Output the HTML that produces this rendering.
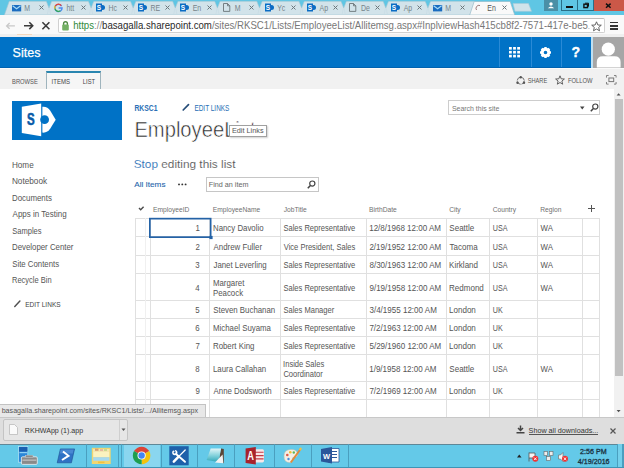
<!DOCTYPE html>
<html><head><meta charset="utf-8"><style>
*{box-sizing:border-box;margin:0;padding:0}
html,body{width:624px;height:468px;overflow:hidden;background:#fff;font-family:"Liberation Sans",sans-serif}
.a{position:absolute;white-space:nowrap;line-height:1}
svg.a{overflow:visible}
</style></head><body>
<div class="a" style="left:0px;top:0px;width:624px;height:15px;background:#5fc6e4;"></div>
<svg class="a" style="left:0px;top:0px;" width="624" height="15" viewBox="0 0 624 15"><polygon points="4.4,15 9.2,1.3 474.7,1.3 478.7,15" fill="#d2e3ea" stroke="#a3c6d4" stroke-width="0.6"/><polygon points="46.3,0.9 51.7,0.9 49.0,8" fill="#5fc6e4"/><path d="M46.3,1.3 L49.0,8 L51.7,1.3" fill="none" stroke="#a3c6d4" stroke-width="0.6"/><path d="M48.6,8 L47.4,14.5 M49.4,8 L50.6,14.5" stroke="#c3d9e2" stroke-width="0.5"/><polygon points="88.4,0.9 93.8,0.9 91.1,8" fill="#5fc6e4"/><path d="M88.4,1.3 L91.1,8 L93.8,1.3" fill="none" stroke="#a3c6d4" stroke-width="0.6"/><path d="M90.7,8 L89.5,14.5 M91.5,8 L92.7,14.5" stroke="#c3d9e2" stroke-width="0.5"/><polygon points="130.5,0.9 135.9,0.9 133.2,8" fill="#5fc6e4"/><path d="M130.5,1.3 L133.2,8 L135.9,1.3" fill="none" stroke="#a3c6d4" stroke-width="0.6"/><path d="M132.8,8 L131.6,14.5 M133.6,8 L134.8,14.5" stroke="#c3d9e2" stroke-width="0.5"/><polygon points="172.6,0.9 178.0,0.9 175.3,8" fill="#5fc6e4"/><path d="M172.6,1.3 L175.3,8 L178.0,1.3" fill="none" stroke="#a3c6d4" stroke-width="0.6"/><path d="M174.9,8 L173.7,14.5 M175.7,8 L176.9,14.5" stroke="#c3d9e2" stroke-width="0.5"/><polygon points="214.7,0.9 220.1,0.9 217.4,8" fill="#5fc6e4"/><path d="M214.7,1.3 L217.4,8 L220.1,1.3" fill="none" stroke="#a3c6d4" stroke-width="0.6"/><path d="M217.0,8 L215.8,14.5 M217.8,8 L219.0,14.5" stroke="#c3d9e2" stroke-width="0.5"/><polygon points="256.8,0.9 262.2,0.9 259.5,8" fill="#5fc6e4"/><path d="M256.8,1.3 L259.5,8 L262.2,1.3" fill="none" stroke="#a3c6d4" stroke-width="0.6"/><path d="M259.1,8 L257.9,14.5 M259.9,8 L261.1,14.5" stroke="#c3d9e2" stroke-width="0.5"/><polygon points="298.9,0.9 304.3,0.9 301.6,8" fill="#5fc6e4"/><path d="M298.9,1.3 L301.6,8 L304.3,1.3" fill="none" stroke="#a3c6d4" stroke-width="0.6"/><path d="M301.2,8 L300.0,14.5 M302.0,8 L303.2,14.5" stroke="#c3d9e2" stroke-width="0.5"/><polygon points="341.0,0.9 346.4,0.9 343.7,8" fill="#5fc6e4"/><path d="M341.0,1.3 L343.7,8 L346.4,1.3" fill="none" stroke="#a3c6d4" stroke-width="0.6"/><path d="M343.3,8 L342.1,14.5 M344.1,8 L345.3,14.5" stroke="#c3d9e2" stroke-width="0.5"/><polygon points="383.1,0.9 388.5,0.9 385.8,8" fill="#5fc6e4"/><path d="M383.1,1.3 L385.8,8 L388.5,1.3" fill="none" stroke="#a3c6d4" stroke-width="0.6"/><path d="M385.4,8 L384.2,14.5 M386.2,8 L387.4,14.5" stroke="#c3d9e2" stroke-width="0.5"/><polygon points="425.2,0.9 430.6,0.9 427.9,8" fill="#5fc6e4"/><path d="M425.2,1.3 L427.9,8 L430.6,1.3" fill="none" stroke="#a3c6d4" stroke-width="0.6"/><path d="M427.5,8 L426.3,14.5 M428.3,8 L429.5,14.5" stroke="#c3d9e2" stroke-width="0.5"/><polygon points="469.7,15 474.2,1.5 510.2,1.5 514.7,15" fill="#f9f9f9" stroke="#8fb5c5" stroke-width="0.6"/><polygon points="515,11.3 513,3.5 528.5,3.5 531.5,11.3" fill="#cfe3ea" stroke="#a9cbd8" stroke-width="0.6" stroke-linejoin="round"/></svg>
<svg class="a" style="left:12.0px;top:4.8px;" width="9.2" height="6.4" viewBox="0 0 9.2 6.4"><rect x="0" y="0" width="9.2" height="6.4" fill="#1a6cc0"/><polyline points="0.6,0.7 4.6,3.8 8.6,0.7" fill="none" stroke="#a8dcf8" stroke-width="1.1"/></svg>
<svg class="a" style="left:0;top:0" width="624" height="468"><text x="24.24" y="10.60" font-family="Liberation Sans" font-size="8.20" font-weight="normal" fill="#76848a" textLength="5.81" lengthAdjust="spacingAndGlyphs" >M</text></svg>
<svg class="a" style="left:38.5px;top:5px;" width="5" height="5" viewBox="0 0 5 5"><path d="M0.5 0.5 L4.5 4.5 M4.5 0.5 L0.5 4.5" stroke="#6b777c" stroke-width="1"/></svg>
<svg class="a" style="left:54.1px;top:3.2px;" width="9" height="9" viewBox="0 0 9 9"><path d="M7.6 3.2 A3.6 3.6 0 1 0 8.1 5 H4.6" fill="none" stroke="#4a8af4" stroke-width="1.3"/><path d="M7.3 2.6 A3.6 3.6 0 0 0 1.2 3" fill="none" stroke="#ea4335" stroke-width="1.3"/><path d="M1 5.6 A3.6 3.6 0 0 0 6.4 7.8" fill="none" stroke="#34a853" stroke-width="1.3"/><path d="M1.1 3 A3.6 3.6 0 0 0 1 5.6" fill="none" stroke="#fbbc05" stroke-width="1.3"/></svg>
<svg class="a" style="left:0;top:0" width="624" height="468"><text x="66.41" y="10.60" font-family="Liberation Sans" font-size="8.20" font-weight="normal" fill="#76848a" textLength="7.75" lengthAdjust="spacingAndGlyphs" >htt</text></svg>
<svg class="a" style="left:80.6px;top:5px;" width="5" height="5" viewBox="0 0 5 5"><path d="M0.5 0.5 L4.5 4.5 M4.5 0.5 L0.5 4.5" stroke="#6b777c" stroke-width="1"/></svg>
<svg class="a" style="left:96.2px;top:3px;" width="9" height="9" viewBox="0 0 9 9"><rect x="0" y="0.5" width="6" height="8" fill="#0a6cc4"/><circle cx="6.5" cy="4.5" r="2.5" fill="#0a6cc4"/><text x="3" y="7" font-size="6.5" font-weight="bold" fill="#fff" text-anchor="middle" font-family="Liberation Sans">S</text></svg>
<svg class="a" style="left:0;top:0" width="624" height="468"><text x="108.44" y="10.60" font-family="Liberation Sans" font-size="8.20" font-weight="normal" fill="#76848a" textLength="8.52" lengthAdjust="spacingAndGlyphs" >Hc</text></svg>
<svg class="a" style="left:122.7px;top:5px;" width="5" height="5" viewBox="0 0 5 5"><path d="M0.5 0.5 L4.5 4.5 M4.5 0.5 L0.5 4.5" stroke="#6b777c" stroke-width="1"/></svg>
<svg class="a" style="left:138.3px;top:3px;" width="9" height="9" viewBox="0 0 9 9"><rect x="0" y="0.5" width="6" height="8" fill="#0a6cc4"/><circle cx="6.5" cy="4.5" r="2.5" fill="#0a6cc4"/><text x="3" y="7" font-size="6.5" font-weight="bold" fill="#fff" text-anchor="middle" font-family="Liberation Sans">S</text></svg>
<svg class="a" style="left:0;top:0" width="624" height="468"><text x="150.54" y="10.60" font-family="Liberation Sans" font-size="8.20" font-weight="normal" fill="#76848a" textLength="9.68" lengthAdjust="spacingAndGlyphs" >RE</text></svg>
<svg class="a" style="left:164.8px;top:5px;" width="5" height="5" viewBox="0 0 5 5"><path d="M0.5 0.5 L4.5 4.5 M4.5 0.5 L0.5 4.5" stroke="#6b777c" stroke-width="1"/></svg>
<svg class="a" style="left:180.4px;top:3px;" width="9" height="9" viewBox="0 0 9 9"><rect x="0" y="0.5" width="6" height="8" fill="#0a6cc4"/><circle cx="6.5" cy="4.5" r="2.5" fill="#0a6cc4"/><text x="3" y="7" font-size="6.5" font-weight="bold" fill="#fff" text-anchor="middle" font-family="Liberation Sans">S</text></svg>
<svg class="a" style="left:0;top:0" width="624" height="468"><text x="192.64" y="10.60" font-family="Liberation Sans" font-size="8.20" font-weight="normal" fill="#76848a" textLength="8.53" lengthAdjust="spacingAndGlyphs" >En</text></svg>
<svg class="a" style="left:206.9px;top:5px;" width="5" height="5" viewBox="0 0 5 5"><path d="M0.5 0.5 L4.5 4.5 M4.5 0.5 L0.5 4.5" stroke="#6b777c" stroke-width="1"/></svg>
<svg class="a" style="left:222.5px;top:3.4px;" width="7.5" height="9" viewBox="0 0 7.5 9"><path d="M0.5 0.5 H4.5 L6.8 2.8 V8.4 H0.5 Z M4.5 0.5 V2.8 H6.8" fill="none" stroke="#6a7478" stroke-width="0.9"/></svg>
<svg class="a" style="left:0;top:0" width="624" height="468"><text x="234.74" y="10.60" font-family="Liberation Sans" font-size="8.20" font-weight="normal" fill="#76848a" textLength="5.81" lengthAdjust="spacingAndGlyphs" >M</text></svg>
<svg class="a" style="left:249.0px;top:5px;" width="5" height="5" viewBox="0 0 5 5"><path d="M0.5 0.5 L4.5 4.5 M4.5 0.5 L0.5 4.5" stroke="#6b777c" stroke-width="1"/></svg>
<svg class="a" style="left:264.6px;top:3px;" width="9" height="9" viewBox="0 0 9 9"><rect x="0" y="0.5" width="6" height="8" fill="#0a6cc4"/><circle cx="6.5" cy="4.5" r="2.5" fill="#0a6cc4"/><text x="3" y="7" font-size="6.5" font-weight="bold" fill="#fff" text-anchor="middle" font-family="Liberation Sans">S</text></svg>
<svg class="a" style="left:0;top:0" width="624" height="468"><text x="277.23" y="10.60" font-family="Liberation Sans" font-size="8.20" font-weight="normal" fill="#76848a" textLength="8.13" lengthAdjust="spacingAndGlyphs" >Yc</text></svg>
<svg class="a" style="left:291.1px;top:5px;" width="5" height="5" viewBox="0 0 5 5"><path d="M0.5 0.5 L4.5 4.5 M4.5 0.5 L0.5 4.5" stroke="#6b777c" stroke-width="1"/></svg>
<svg class="a" style="left:306.7px;top:3px;" width="9" height="9" viewBox="0 0 9 9"><rect x="0" y="0.5" width="6" height="8" fill="#0a6cc4"/><circle cx="6.5" cy="4.5" r="2.5" fill="#0a6cc4"/><text x="3" y="7" font-size="6.5" font-weight="bold" fill="#fff" text-anchor="middle" font-family="Liberation Sans">S</text></svg>
<svg class="a" style="left:0;top:0" width="624" height="468"><text x="319.50" y="10.60" font-family="Liberation Sans" font-size="8.20" font-weight="normal" fill="#76848a" textLength="8.53" lengthAdjust="spacingAndGlyphs" >Ap</text></svg>
<svg class="a" style="left:333.2px;top:5px;" width="5" height="5" viewBox="0 0 5 5"><path d="M0.5 0.5 L4.5 4.5 M4.5 0.5 L0.5 4.5" stroke="#6b777c" stroke-width="1"/></svg>
<svg class="a" style="left:348.8px;top:3.4px;" width="7.5" height="9" viewBox="0 0 7.5 9"><path d="M0.5 0.5 H4.5 L6.8 2.8 V8.4 H0.5 Z M4.5 0.5 V2.8 H6.8" fill="none" stroke="#6a7478" stroke-width="0.9"/></svg>
<svg class="a" style="left:0;top:0" width="624" height="468"><text x="361.04" y="10.60" font-family="Liberation Sans" font-size="8.20" font-weight="normal" fill="#76848a" textLength="8.91" lengthAdjust="spacingAndGlyphs" >De</text></svg>
<svg class="a" style="left:375.3px;top:5px;" width="5" height="5" viewBox="0 0 5 5"><path d="M0.5 0.5 L4.5 4.5 M4.5 0.5 L0.5 4.5" stroke="#6b777c" stroke-width="1"/></svg>
<svg class="a" style="left:390.90000000000003px;top:3px;" width="9" height="9" viewBox="0 0 9 9"><rect x="0" y="0.5" width="6" height="8" fill="#0a6cc4"/><circle cx="6.5" cy="4.5" r="2.5" fill="#0a6cc4"/><text x="3" y="7" font-size="6.5" font-weight="bold" fill="#fff" text-anchor="middle" font-family="Liberation Sans">S</text></svg>
<svg class="a" style="left:0;top:0" width="624" height="468"><text x="403.70" y="10.60" font-family="Liberation Sans" font-size="8.20" font-weight="normal" fill="#76848a" textLength="8.53" lengthAdjust="spacingAndGlyphs" >Ap</text></svg>
<svg class="a" style="left:417.40000000000003px;top:5px;" width="5" height="5" viewBox="0 0 5 5"><path d="M0.5 0.5 L4.5 4.5 M4.5 0.5 L0.5 4.5" stroke="#6b777c" stroke-width="1"/></svg>
<svg class="a" style="left:433.0px;top:4.8px;" width="9.2" height="6.4" viewBox="0 0 9.2 6.4"><rect x="0" y="0" width="9.2" height="6.4" fill="#1a6cc0"/><polyline points="0.6,0.7 4.6,3.8 8.6,0.7" fill="none" stroke="#a8dcf8" stroke-width="1.1"/></svg>
<svg class="a" style="left:0;top:0" width="624" height="468"><text x="445.24" y="10.60" font-family="Liberation Sans" font-size="8.20" font-weight="normal" fill="#76848a" textLength="5.81" lengthAdjust="spacingAndGlyphs" >M</text></svg>
<svg class="a" style="left:459.5px;top:5px;" width="5" height="5" viewBox="0 0 5 5"><path d="M0.5 0.5 L4.5 4.5 M4.5 0.5 L0.5 4.5" stroke="#6b777c" stroke-width="1"/></svg>
<svg class="a" style="left:475.1px;top:3.5px;" width="8" height="8" viewBox="0 0 8 8"><path d="M1.5 6 A3 3 0 0 1 5 1.5" fill="none" stroke="#a07a7a" stroke-width="1"/></svg>
<svg class="a" style="left:0;top:0" width="624" height="468"><text x="487.34" y="10.60" font-family="Liberation Sans" font-size="8.20" font-weight="normal" fill="#555" textLength="8.53" lengthAdjust="spacingAndGlyphs" >En</text></svg>
<svg class="a" style="left:501.6px;top:5px;" width="5" height="5" viewBox="0 0 5 5"><path d="M0.5 0.5 L4.5 4.5 M4.5 0.5 L0.5 4.5" stroke="#6b777c" stroke-width="1"/></svg>
<div class="a" style="left:543.8px;top:0px;width:14.1px;height:10.6px;background:#4a8fa6;"></div>
<svg class="a" style="left:543.8px;top:0px;" width="14.1" height="10.6" viewBox="0 0 14.1 10.6"><circle cx="7" cy="4" r="1.7" fill="#fff"/><path d="M3.8 8.3 Q7 4.8 10.2 8.3 Z" fill="#fff"/></svg>
<div class="a" style="left:561px;top:0px;width:17.3px;height:11px;background:#5fc6e4;border-left:1px solid #2a6f88;border-right:1px solid #2a6f88;border-bottom:1px solid #2a6f88"></div>
<div class="a" style="left:566.3px;top:5.8px;width:6.4px;height:2px;background:#111;"></div>
<div class="a" style="left:578.3px;top:0px;width:15.5px;height:11px;background:#5fc6e4;border-right:1px solid #2a6f88;border-bottom:1px solid #2a6f88"></div>
<svg class="a" style="left:0px;top:0px;left:0;top:0" width="624" height="468" viewBox="0 0 624 468"><rect x="583.9" y="4.2" width="3.6" height="3.4" fill="none" stroke="#111" stroke-width="1.4"/><path d="M585 3.2 H588.5 V6.6" fill="none" stroke="#111" stroke-width="1"/></svg>
<div class="a" style="left:593.8px;top:0px;width:30.2px;height:11.3px;background:#cb5848;"></div>
<svg class="a" style="left:0px;top:0px;left:0;top:0" width="624" height="468" viewBox="0 0 624 468"><path d="M606 3.6 L610.6 7.7 M610.6 3.6 L606 7.7" stroke="#111" stroke-width="1.5"/></svg>
<div class="a" style="left:0px;top:14.7px;width:624px;height:22.3px;background:#f9f9f9;"></div>
<div class="a" style="left:0px;top:33.5px;width:624px;height:3.3px;background:#efefef;"></div>
<svg class="a" style="left:0px;top:0px;left:0;top:0" width="624" height="468" viewBox="0 0 624 468"><path d="M6.5 25.9 H14.9 M9.6 23 L6.6 25.9 L9.6 28.8" fill="none" stroke="#c8c8c8" stroke-width="1.3"/><path d="M24 25.7 H32.6 M29.3 22.3 L32.7 25.7 L29.3 29.1" fill="none" stroke="#3a3a3a" stroke-width="1.6"/><path d="M42.4 22.2 L49.4 29.2 M49.4 22.2 L42.4 29.2" stroke="#3a3a3a" stroke-width="1.6"/></svg>
<div class="a" style="left:57.5px;top:17.5px;width:547px;height:15.2px;background:#fff;border:1px solid #d0d0d0;border-top-color:#bdbdbd;border-radius:2px"></div>
<svg class="a" style="left:0px;top:0px;left:0;top:0" width="624" height="468" viewBox="0 0 624 468"><path d="M63.6 25 V23.6 A1.9 1.9 0 0 1 67.4 23.6 V25" fill="none" stroke="#4f8a43" stroke-width="1.4"/><rect x="62.2" y="24.6" width="6.6" height="5.8" rx="1" fill="#73b064"/></svg>
<svg class="a" style="left:0;top:0" width="624" height="468"><text x="73.13" y="29.00" font-family="Liberation Sans" font-size="10.26" font-weight="normal" fill="#777" textLength="514.75" lengthAdjust="spacingAndGlyphs" ><tspan fill="#2f8a3a">https</tspan><tspan fill="#888">://</tspan><tspan fill="#2a2a2a">basagalla.sharepoint.com</tspan><tspan fill="#777">/sites/RKSC1/Lists/EmployeeList/Allitemsg.aspx#InplviewHash415cb8f2-7571-417e-be5</tspan></text></svg>
<svg class="a" style="left:0px;top:0px;left:0;top:0" width="624" height="468" viewBox="0 0 624 468"><text x="587.6" y="29" font-family="Liberation Sans" font-size="9.7" fill="#bbb">.</text></svg>
<svg class="a" style="left:591px;top:20.5px;" width="11" height="11" viewBox="0 0 11 11"><path d="M5.5 0.8 L6.9 4 L10.3 4.2 L7.7 6.4 L8.5 9.8 L5.5 8 L2.5 9.8 L3.3 6.4 L0.7 4.2 L4.1 4 Z" fill="#fff" stroke="#555" stroke-width="0.9"/></svg>
<div class="a" style="left:609.8px;top:21.6px;width:7.9px;height:1.7px;background:#333;"></div>
<div class="a" style="left:609.8px;top:25px;width:7.9px;height:1.7px;background:#333;"></div>
<div class="a" style="left:609.8px;top:28.2px;width:7.9px;height:1.7px;background:#333;"></div>
<div class="a" style="left:16.7px;top:34.2px;width:15px;height:0.8px;background:#f3d7bd;"></div>
<div class="a" style="left:0px;top:36.8px;width:591px;height:30.8px;background:#0072c6;"></div>
<div class="a" style="left:0px;top:66.6px;width:591px;height:1px;background:#0062b0;"></div>
<div class="a" style="left:590.6px;top:36.8px;width:2.6px;height:30.8px;background:#bfe0f2;"></div>
<svg class="a" style="left:0;top:0" width="624" height="468"><text x="12.54" y="57.00" font-family="Liberation Sans" font-size="13.31" font-weight="normal" fill="#fff" textLength="27.88" lengthAdjust="spacingAndGlyphs" stroke="#fff" stroke-width="0.25">Sites</text></svg>
<div class="a" style="left:499px;top:37px;width:1px;height:30px;background:#2a8ad6;"></div>
<div class="a" style="left:530.5px;top:37px;width:1px;height:30px;background:#2a8ad6;"></div>
<div class="a" style="left:560.5px;top:37px;width:1px;height:30px;background:#2a8ad6;"></div>
<svg class="a" style="left:509px;top:47px;" width="11.5" height="10.5" viewBox="0 0 11.5 10.5"><rect x="0.00" y="0.00" width="2.8" height="2.6" fill="#fff"/><rect x="4.10" y="0.00" width="2.8" height="2.6" fill="#fff"/><rect x="8.20" y="0.00" width="2.8" height="2.6" fill="#fff"/><rect x="0.00" y="3.90" width="2.8" height="2.6" fill="#fff"/><rect x="4.10" y="3.90" width="2.8" height="2.6" fill="#fff"/><rect x="8.20" y="3.90" width="2.8" height="2.6" fill="#fff"/><rect x="0.00" y="7.80" width="2.8" height="2.6" fill="#fff"/><rect x="4.10" y="7.80" width="2.8" height="2.6" fill="#fff"/><rect x="8.20" y="7.80" width="2.8" height="2.6" fill="#fff"/></svg>
<svg class="a" style="left:539.5px;top:46.7px;" width="11" height="11" viewBox="0 0 11 11"><circle cx="5.5" cy="5.5" r="3.3" fill="none" stroke="#fff" stroke-width="3"/><rect x="4.3" y="0" width="2.4" height="3" fill="#fff" transform="rotate(0 5.5 5.5)"/><rect x="4.3" y="0" width="2.4" height="3" fill="#fff" transform="rotate(45 5.5 5.5)"/><rect x="4.3" y="0" width="2.4" height="3" fill="#fff" transform="rotate(90 5.5 5.5)"/><rect x="4.3" y="0" width="2.4" height="3" fill="#fff" transform="rotate(135 5.5 5.5)"/><rect x="4.3" y="0" width="2.4" height="3" fill="#fff" transform="rotate(180 5.5 5.5)"/><rect x="4.3" y="0" width="2.4" height="3" fill="#fff" transform="rotate(225 5.5 5.5)"/><rect x="4.3" y="0" width="2.4" height="3" fill="#fff" transform="rotate(270 5.5 5.5)"/><rect x="4.3" y="0" width="2.4" height="3" fill="#fff" transform="rotate(315 5.5 5.5)"/></svg>
<svg class="a" style="left:0;top:0" width="624" height="468"><text x="571.56" y="57.30" font-family="Liberation Sans" font-size="15.52" font-weight="bold" fill="#fff" textLength="8.62" lengthAdjust="spacingAndGlyphs" stroke="#fff" stroke-width="0.4">?</text></svg>
<div class="a" style="left:593px;top:36.8px;width:31px;height:30.8px;background:#a6a6a6;"></div>
<svg class="a" style="left:0px;top:0px;left:0;top:0" width="624" height="468" viewBox="0 0 624 468"><circle cx="608.3" cy="49.2" r="6.6" fill="#fff"/><path d="M596.8 67.6 V62 Q596.8 56.3 603 56.3 H614.4 Q620.6 56.3 620.6 62 V67.6 Z" fill="#fff"/></svg>
<div class="a" style="left:0px;top:67.6px;width:624px;height:21.2px;background:#f1f1f1;"></div>
<div class="a" style="left:0px;top:67.6px;width:624px;height:1px;background:#fafafa;"></div>
<svg class="a" style="left:0;top:0" width="624" height="468"><text x="12.04" y="83.70" font-family="Liberation Sans" font-size="7.61" font-weight="normal" fill="#555" textLength="25.80" lengthAdjust="spacingAndGlyphs" >BROWSE</text></svg>
<div class="a" style="left:45.7px;top:71px;width:55.7px;height:17.5px;background:#f6f6f6;border-left:1px solid #9fb4bd;border-right:1px solid #9fb4bd;border-top:2px solid #2a86b0"></div>
<svg class="a" style="left:0;top:0" width="624" height="468"><text x="51.56" y="83.70" font-family="Liberation Sans" font-size="7.61" font-weight="normal" fill="#444" textLength="18.42" lengthAdjust="spacingAndGlyphs" >ITEMS</text></svg>
<svg class="a" style="left:0;top:0" width="624" height="468"><text x="82.84" y="83.70" font-family="Liberation Sans" font-size="7.61" font-weight="normal" fill="#444" textLength="12.19" lengthAdjust="spacingAndGlyphs" >LIST</text></svg>
<svg class="a" style="left:515.5px;top:76px;" width="9.5" height="9.5" viewBox="0 0 9.5 9.5"><circle cx="4.75" cy="4.75" r="3.5" fill="none" stroke="#666" stroke-width="0.9" stroke-dasharray="4.5 1"/><circle cx="4.75" cy="1.2" r="1.2" fill="#555"/><circle cx="1.5" cy="6.8" r="1.2" fill="#555"/><circle cx="8" cy="6.8" r="1.2" fill="#555"/></svg>
<svg class="a" style="left:0;top:0" width="624" height="468"><text x="527.75" y="83.30" font-family="Liberation Sans" font-size="7.33" font-weight="normal" fill="#555" textLength="19.48" lengthAdjust="spacingAndGlyphs" >SHARE</text></svg>
<svg class="a" style="left:555px;top:74.5px;" width="10" height="10" viewBox="0 0 10 10"><path d="M5 0.8 L6.2 3.8 L9.4 4 L6.9 6 L7.7 9.2 L5 7.5 L2.3 9.2 L3.1 6 L0.6 4 L3.8 3.8 Z" fill="none" stroke="#555" stroke-width="0.9"/></svg>
<svg class="a" style="left:0;top:0" width="624" height="468"><text x="567.93" y="83.30" font-family="Liberation Sans" font-size="7.33" font-weight="normal" fill="#555" textLength="24.68" lengthAdjust="spacingAndGlyphs" >FOLLOW</text></svg>
<svg class="a" style="left:605.6px;top:75px;" width="10.6" height="9.6" viewBox="0 0 10.6 9.6"><path d="M0.5 2.6 V0.5 H2.6 M8 0.5 H10.1 V2.6 M10.1 7 V9.1 H8 M2.6 9.1 H0.5 V7" fill="none" stroke="#777" stroke-width="0.9"/><rect x="2.9" y="3" width="4.8" height="3.6" fill="none" stroke="#777" stroke-width="1"/></svg>
<div class="a" style="left:614px;top:88.8px;width:10px;height:328px;background:#f1f1f1;"></div>
<div class="a" style="left:614.8px;top:99.2px;width:8.6px;height:276.6px;background:#c1c1c1;"></div>
<svg class="a" style="left:0px;top:0px;left:0;top:0" width="624" height="468" viewBox="0 0 624 468"><path d="M616.6 95.6 L618.6 93.3 L620.6 95.6 Z" fill="#505050"/><path d="M616.6 410 L618.6 412.3 L620.6 410 Z" fill="#505050"/></svg>
<div class="a" style="left:12px;top:100.5px;width:110px;height:39px;background:#0072c6;"></div>
<svg class="a" style="left:0px;top:0px;left:0;top:0" width="624" height="468" viewBox="0 0 624 468"><path d="M21.8 106.8 L41.2 103.6 V136.3 L21.8 132.9 Z" fill="#fff"/><path d="M42.4 106.8 Q47.5 106.3 50.3 110.8 L55.7 119.7 L50.3 128.6 Q47.5 133.1 42.4 132.6 Z" fill="#fff"/><circle cx="44.6" cy="119.7" r="4.4" fill="#0072c6"/></svg>
<svg class="a" style="left:0;top:0" width="624" height="468"><text x="26.96" y="125.40" font-family="Liberation Sans" font-size="16.38" font-weight="bold" fill="#0a5aa8" textLength="7.67" lengthAdjust="spacingAndGlyphs" stroke="#0a5aa8" stroke-width="0.6">S</text></svg>
<svg class="a" style="left:0;top:0" width="624" height="468"><text x="134.46" y="110.70" font-family="Liberation Sans" font-size="8.19" font-weight="bold" fill="#2a6fb5" textLength="23.01" lengthAdjust="spacingAndGlyphs" >RKSC1</text></svg>
<svg class="a" style="left:0px;top:0px;left:0;top:0" width="624" height="468" viewBox="0 0 624 468"><path d="M183.2 110 L188.5 104.6" stroke="#264d78" stroke-width="1.7" stroke-linecap="round"/></svg>
<svg class="a" style="left:0;top:0" width="624" height="468"><text x="194.38" y="110.70" font-family="Liberation Sans" font-size="8.19" font-weight="normal" fill="#2a6fb5" textLength="35.03" lengthAdjust="spacingAndGlyphs" >EDIT LINKS</text></svg>
<svg class="a" style="left:0;top:0" width="624" height="468"><text x="134.39" y="136.50" font-family="Liberation Sans" font-size="22.60" font-weight="normal" fill="#222" textLength="121.17" lengthAdjust="spacingAndGlyphs" stroke="#fff" stroke-width="0.6">EmployeeList</text></svg>
<div class="a" style="left:228.8px;top:125px;width:38.7px;height:11.6px;background:#fff;border:1px solid #a0a0a0;box-shadow:1px 1px 1.5px rgba(0,0,0,.18)"></div>
<svg class="a" style="left:0;top:0" width="624" height="468"><text x="231.92" y="133.20" font-family="Liberation Sans" font-size="7.49" font-weight="normal" fill="#555" textLength="31.64" lengthAdjust="spacingAndGlyphs" >Edit Links</text></svg>
<div class="a" style="left:448.4px;top:100.4px;width:152px;height:14.8px;background:#fff;border:1px solid #cdcdcd"></div>
<svg class="a" style="left:0;top:0" width="624" height="468"><text x="451.89" y="110.90" font-family="Liberation Sans" font-size="7.49" font-weight="normal" fill="#777" textLength="47.54" lengthAdjust="spacingAndGlyphs" >Search this site</text></svg>
<svg class="a" style="left:579.5px;top:106px;" width="5" height="4" viewBox="0 0 5 4"><path d="M0 0.5 H4.5 L2.25 3.5 Z" fill="#444"/></svg>
<svg class="a" style="left:589.5px;top:102.5px;" width="9" height="9" viewBox="0 0 9 9"><circle cx="5.3" cy="3.6" r="2.6" fill="none" stroke="#444" stroke-width="1.2"/><path d="M3.4 5.4 L0.8 8.2" stroke="#444" stroke-width="1.5"/></svg>
<svg class="a" style="left:0;top:0" width="624" height="468"><text x="133.67" y="168.40" font-family="Liberation Sans" font-size="11.78" font-weight="normal" fill="#555" textLength="101.80" lengthAdjust="spacingAndGlyphs" stroke="#fff" stroke-width="0.12"><tspan fill="#2a6fb5">Stop</tspan> editing this list</text></svg>
<svg class="a" style="left:0;top:0" width="624" height="468"><text x="134.20" y="187.10" font-family="Liberation Sans" font-size="7.21" font-weight="normal" fill="#2464aa" textLength="31.28" lengthAdjust="spacingAndGlyphs" stroke="#2464aa" stroke-width="0.08">All Items</text></svg>
<svg class="a" style="left:0px;top:0px;left:0;top:0" width="624" height="468" viewBox="0 0 624 468"><circle cx="179.0" cy="184.4" r="0.95" fill="#333"/><circle cx="182.3" cy="184.4" r="0.95" fill="#333"/><circle cx="185.6" cy="184.4" r="0.95" fill="#333"/></svg>
<div class="a" style="left:206px;top:176.5px;width:113px;height:15px;background:#fff;border:1px solid #c6c6c6"></div>
<svg class="a" style="left:0;top:0" width="624" height="468"><text x="208.82" y="187.00" font-family="Liberation Sans" font-size="7.77" font-weight="normal" fill="#666" textLength="39.63" lengthAdjust="spacingAndGlyphs" >Find an item</text></svg>
<svg class="a" style="left:307px;top:179.5px;" width="9" height="9" viewBox="0 0 9 9"><circle cx="5.3" cy="3.6" r="2.6" fill="none" stroke="#444" stroke-width="1.2"/><path d="M3.4 5.4 L0.8 8.2" stroke="#444" stroke-width="1.5"/></svg>
<svg class="a" style="left:0;top:0" width="624" height="468"><text x="11.95" y="167.80" font-family="Liberation Sans" font-size="8.75" font-weight="normal" fill="#555" textLength="21.74" lengthAdjust="spacingAndGlyphs" >Home</text></svg>
<svg class="a" style="left:0;top:0" width="624" height="468"><text x="11.94" y="184.25" font-family="Liberation Sans" font-size="8.75" font-weight="normal" fill="#555" textLength="35.16" lengthAdjust="spacingAndGlyphs" >Notebook</text></svg>
<svg class="a" style="left:0;top:0" width="624" height="468"><text x="11.97" y="200.70" font-family="Liberation Sans" font-size="8.75" font-weight="normal" fill="#555" textLength="39.89" lengthAdjust="spacingAndGlyphs" >Documents</text></svg>
<svg class="a" style="left:0;top:0" width="624" height="468"><text x="12.60" y="217.15" font-family="Liberation Sans" font-size="8.75" font-weight="normal" fill="#555" textLength="54.01" lengthAdjust="spacingAndGlyphs" >Apps in Testing</text></svg>
<svg class="a" style="left:0;top:0" width="624" height="468"><text x="12.26" y="233.60" font-family="Liberation Sans" font-size="8.75" font-weight="normal" fill="#555" textLength="29.31" lengthAdjust="spacingAndGlyphs" >Samples</text></svg>
<svg class="a" style="left:0;top:0" width="624" height="468"><text x="11.97" y="250.05" font-family="Liberation Sans" font-size="8.75" font-weight="normal" fill="#555" textLength="61.47" lengthAdjust="spacingAndGlyphs" >Developer Center</text></svg>
<svg class="a" style="left:0;top:0" width="624" height="468"><text x="12.25" y="266.50" font-family="Liberation Sans" font-size="8.75" font-weight="normal" fill="#555" textLength="46.81" lengthAdjust="spacingAndGlyphs" >Site Contents</text></svg>
<svg class="a" style="left:0;top:0" width="624" height="468"><text x="12.00" y="282.95" font-family="Liberation Sans" font-size="8.75" font-weight="normal" fill="#555" textLength="39.59" lengthAdjust="spacingAndGlyphs" >Recycle Bin</text></svg>
<svg class="a" style="left:0px;top:0px;left:0;top:0" width="624" height="468" viewBox="0 0 624 468"><path d="M14.8 306.6 L19.9 301.1" stroke="#505050" stroke-width="1.45" stroke-linecap="round"/></svg>
<svg class="a" style="left:0;top:0" width="624" height="468"><text x="25.18" y="307.00" font-family="Liberation Sans" font-size="7.47" font-weight="normal" fill="#444" textLength="35.43" lengthAdjust="spacingAndGlyphs" >EDIT LINKS</text></svg>
<div class="a" style="left:135px;top:218px;width:464px;height:1px;background:#e0e0e0;"></div>
<div class="a" style="left:135px;top:236px;width:464px;height:1px;background:#e0e0e0;"></div>
<div class="a" style="left:135px;top:255px;width:464px;height:1px;background:#e0e0e0;"></div>
<div class="a" style="left:135px;top:273px;width:464px;height:1px;background:#e0e0e0;"></div>
<div class="a" style="left:135px;top:300px;width:464px;height:1px;background:#e0e0e0;"></div>
<div class="a" style="left:135px;top:318px;width:464px;height:1px;background:#e0e0e0;"></div>
<div class="a" style="left:135px;top:336px;width:464px;height:1px;background:#e0e0e0;"></div>
<div class="a" style="left:135px;top:354px;width:464px;height:1px;background:#e0e0e0;"></div>
<div class="a" style="left:135px;top:381px;width:464px;height:1px;background:#e0e0e0;"></div>
<div class="a" style="left:135px;top:399px;width:464px;height:1px;background:#e0e0e0;"></div>
<div class="a" style="left:135px;top:430px;width:464px;height:1px;background:#e0e0e0;"></div>
<div class="a" style="left:135px;top:218px;width:1px;height:212px;background:#e0e0e0;"></div>
<div class="a" style="left:150px;top:218px;width:1px;height:212px;background:#e0e0e0;"></div>
<div class="a" style="left:209px;top:218px;width:1px;height:212px;background:#e0e0e0;"></div>
<div class="a" style="left:280px;top:218px;width:1px;height:212px;background:#e0e0e0;"></div>
<div class="a" style="left:366px;top:218px;width:1px;height:212px;background:#e0e0e0;"></div>
<div class="a" style="left:446px;top:218px;width:1px;height:212px;background:#e0e0e0;"></div>
<div class="a" style="left:489px;top:218px;width:1px;height:212px;background:#e0e0e0;"></div>
<div class="a" style="left:537px;top:218px;width:1px;height:212px;background:#e0e0e0;"></div>
<div class="a" style="left:582px;top:218px;width:1px;height:212px;background:#e0e0e0;"></div>
<div class="a" style="left:599px;top:218px;width:1px;height:212px;background:#e0e0e0;"></div>
<svg class="a" style="left:0px;top:0px;left:0;top:0" width="624" height="468" viewBox="0 0 624 468"><path d="M139 208 L140.7 209.8 L143.6 206.8" fill="none" stroke="#4a4a4a" stroke-width="1.4"/></svg>
<svg class="a" style="left:0;top:0" width="624" height="468"><text x="153.07" y="212.00" font-family="Liberation Sans" font-size="7.58" font-weight="normal" fill="#707070" textLength="36.35" lengthAdjust="spacingAndGlyphs" >EmployeeID</text></svg>
<svg class="a" style="left:0;top:0" width="624" height="468"><text x="212.87" y="212.00" font-family="Liberation Sans" font-size="7.58" font-weight="normal" fill="#707070" textLength="47.47" lengthAdjust="spacingAndGlyphs" >EmployeeName</text></svg>
<svg class="a" style="left:0;top:0" width="624" height="468"><text x="283.70" y="212.00" font-family="Liberation Sans" font-size="7.58" font-weight="normal" fill="#707070" textLength="23.12" lengthAdjust="spacingAndGlyphs" >JobTitle</text></svg>
<svg class="a" style="left:0;top:0" width="624" height="468"><text x="368.97" y="212.00" font-family="Liberation Sans" font-size="7.58" font-weight="normal" fill="#707070" textLength="27.82" lengthAdjust="spacingAndGlyphs" >BirthDate</text></svg>
<svg class="a" style="left:0;top:0" width="624" height="468"><text x="449.17" y="212.00" font-family="Liberation Sans" font-size="7.58" font-weight="normal" fill="#707070" textLength="11.49" lengthAdjust="spacingAndGlyphs" >City</text></svg>
<svg class="a" style="left:0;top:0" width="624" height="468"><text x="492.67" y="212.00" font-family="Liberation Sans" font-size="7.58" font-weight="normal" fill="#707070" textLength="23.37" lengthAdjust="spacingAndGlyphs" >Country</text></svg>
<svg class="a" style="left:0;top:0" width="624" height="468"><text x="540.27" y="212.00" font-family="Liberation Sans" font-size="7.58" font-weight="normal" fill="#707070" textLength="21.15" lengthAdjust="spacingAndGlyphs" >Region</text></svg>
<svg class="a" style="left:587.5px;top:204.5px;" width="7" height="7" viewBox="0 0 7 7"><path d="M3.5 0 V7 M0 3.5 H7" stroke="#555" stroke-width="1"/></svg>
<svg class="a" style="left:0;top:0" width="624" height="468"><text x="195.40" y="231.00" font-family="Liberation Sans" font-size="8.72" font-weight="normal" fill="#555" textLength="4.36" lengthAdjust="spacingAndGlyphs" >1</text></svg>
<svg class="a" style="left:0;top:0" width="624" height="468"><text x="212.97" y="231.00" font-family="Liberation Sans" font-size="8.72" font-weight="normal" fill="#555" textLength="50.60" lengthAdjust="spacingAndGlyphs" >Nancy Davolio</text></svg>
<svg class="a" style="left:0;top:0" width="624" height="468"><text x="283.46" y="231.00" font-family="Liberation Sans" font-size="8.72" font-weight="normal" fill="#555" textLength="71.70" lengthAdjust="spacingAndGlyphs" >Sales Representative</text></svg>
<svg class="a" style="left:0;top:0" width="624" height="468"><text x="369.20" y="231.00" font-family="Liberation Sans" font-size="8.72" font-weight="normal" fill="#555" textLength="71.82" lengthAdjust="spacingAndGlyphs" >12/8/1968 12:00 AM</text></svg>
<svg class="a" style="left:0;top:0" width="624" height="468"><text x="449.34" y="231.00" font-family="Liberation Sans" font-size="8.72" font-weight="normal" fill="#555" textLength="24.98" lengthAdjust="spacingAndGlyphs" >Seattle</text></svg>
<svg class="a" style="left:0;top:0" width="624" height="468"><text x="492.76" y="231.00" font-family="Liberation Sans" font-size="8.72" font-weight="normal" fill="#555" textLength="14.70" lengthAdjust="spacingAndGlyphs" >USA</text></svg>
<svg class="a" style="left:0;top:0" width="624" height="468"><text x="540.56" y="231.00" font-family="Liberation Sans" font-size="8.72" font-weight="normal" fill="#555" textLength="12.35" lengthAdjust="spacingAndGlyphs" >WA</text></svg>
<svg class="a" style="left:0;top:0" width="624" height="468"><text x="195.44" y="249.50" font-family="Liberation Sans" font-size="8.72" font-weight="normal" fill="#555" textLength="4.36" lengthAdjust="spacingAndGlyphs" >2</text></svg>
<svg class="a" style="left:0;top:0" width="624" height="468"><text x="213.60" y="249.50" font-family="Liberation Sans" font-size="8.72" font-weight="normal" fill="#555" textLength="48.42" lengthAdjust="spacingAndGlyphs" >Andrew Fuller</text></svg>
<svg class="a" style="left:0;top:0" width="624" height="468"><text x="283.76" y="249.50" font-family="Liberation Sans" font-size="8.72" font-weight="normal" fill="#555" textLength="71.56" lengthAdjust="spacingAndGlyphs" >Vice President, Sales</text></svg>
<svg class="a" style="left:0;top:0" width="624" height="468"><text x="369.40" y="249.50" font-family="Liberation Sans" font-size="8.72" font-weight="normal" fill="#555" textLength="71.82" lengthAdjust="spacingAndGlyphs" >2/19/1952 12:00 AM</text></svg>
<svg class="a" style="left:0;top:0" width="624" height="468"><text x="449.54" y="249.50" font-family="Liberation Sans" font-size="8.72" font-weight="normal" fill="#555" textLength="28.09" lengthAdjust="spacingAndGlyphs" >Tacoma</text></svg>
<svg class="a" style="left:0;top:0" width="624" height="468"><text x="492.76" y="249.50" font-family="Liberation Sans" font-size="8.72" font-weight="normal" fill="#555" textLength="14.70" lengthAdjust="spacingAndGlyphs" >USA</text></svg>
<svg class="a" style="left:0;top:0" width="624" height="468"><text x="540.56" y="249.50" font-family="Liberation Sans" font-size="8.72" font-weight="normal" fill="#555" textLength="12.35" lengthAdjust="spacingAndGlyphs" >WA</text></svg>
<svg class="a" style="left:0;top:0" width="624" height="468"><text x="195.36" y="268.00" font-family="Liberation Sans" font-size="8.72" font-weight="normal" fill="#555" textLength="4.36" lengthAdjust="spacingAndGlyphs" >3</text></svg>
<svg class="a" style="left:0;top:0" width="624" height="468"><text x="213.48" y="268.00" font-family="Liberation Sans" font-size="8.72" font-weight="normal" fill="#555" textLength="53.23" lengthAdjust="spacingAndGlyphs" >Janet Leverling</text></svg>
<svg class="a" style="left:0;top:0" width="624" height="468"><text x="283.46" y="268.00" font-family="Liberation Sans" font-size="8.72" font-weight="normal" fill="#555" textLength="71.70" lengthAdjust="spacingAndGlyphs" >Sales Representative</text></svg>
<svg class="a" style="left:0;top:0" width="624" height="468"><text x="369.44" y="268.00" font-family="Liberation Sans" font-size="8.72" font-weight="normal" fill="#555" textLength="71.82" lengthAdjust="spacingAndGlyphs" >8/30/1963 12:00 AM</text></svg>
<svg class="a" style="left:0;top:0" width="624" height="468"><text x="449.06" y="268.00" font-family="Liberation Sans" font-size="8.72" font-weight="normal" fill="#555" textLength="28.98" lengthAdjust="spacingAndGlyphs" >Kirkland</text></svg>
<svg class="a" style="left:0;top:0" width="624" height="468"><text x="492.76" y="268.00" font-family="Liberation Sans" font-size="8.72" font-weight="normal" fill="#555" textLength="14.70" lengthAdjust="spacingAndGlyphs" >USA</text></svg>
<svg class="a" style="left:0;top:0" width="624" height="468"><text x="540.56" y="268.00" font-family="Liberation Sans" font-size="8.72" font-weight="normal" fill="#555" textLength="12.35" lengthAdjust="spacingAndGlyphs" >WA</text></svg>
<svg class="a" style="left:0;top:0" width="624" height="468"><text x="195.28" y="290.90" font-family="Liberation Sans" font-size="8.72" font-weight="normal" fill="#555" textLength="4.36" lengthAdjust="spacingAndGlyphs" >4</text></svg>
<svg class="a" style="left:0;top:0" width="624" height="468"><text x="212.97" y="286.10" font-family="Liberation Sans" font-size="8.72" font-weight="normal" fill="#555" textLength="31.40" lengthAdjust="spacingAndGlyphs" >Margaret</text></svg>
<svg class="a" style="left:0;top:0" width="624" height="468"><text x="212.97" y="295.90" font-family="Liberation Sans" font-size="8.72" font-weight="normal" fill="#555" textLength="30.10" lengthAdjust="spacingAndGlyphs" >Peacock</text></svg>
<svg class="a" style="left:0;top:0" width="624" height="468"><text x="283.46" y="290.90" font-family="Liberation Sans" font-size="8.72" font-weight="normal" fill="#555" textLength="71.70" lengthAdjust="spacingAndGlyphs" >Sales Representative</text></svg>
<svg class="a" style="left:0;top:0" width="624" height="468"><text x="369.44" y="290.90" font-family="Liberation Sans" font-size="8.72" font-weight="normal" fill="#555" textLength="71.82" lengthAdjust="spacingAndGlyphs" >9/19/1958 12:00 AM</text></svg>
<svg class="a" style="left:0;top:0" width="624" height="468"><text x="449.06" y="290.90" font-family="Liberation Sans" font-size="8.72" font-weight="normal" fill="#555" textLength="34.79" lengthAdjust="spacingAndGlyphs" >Redmond</text></svg>
<svg class="a" style="left:0;top:0" width="624" height="468"><text x="492.76" y="290.90" font-family="Liberation Sans" font-size="8.72" font-weight="normal" fill="#555" textLength="14.70" lengthAdjust="spacingAndGlyphs" >USA</text></svg>
<svg class="a" style="left:0;top:0" width="624" height="468"><text x="540.56" y="290.90" font-family="Liberation Sans" font-size="8.72" font-weight="normal" fill="#555" textLength="12.35" lengthAdjust="spacingAndGlyphs" >WA</text></svg>
<svg class="a" style="left:0;top:0" width="624" height="468"><text x="195.36" y="313.00" font-family="Liberation Sans" font-size="8.72" font-weight="normal" fill="#555" textLength="4.36" lengthAdjust="spacingAndGlyphs" >5</text></svg>
<svg class="a" style="left:0;top:0" width="624" height="468"><text x="213.25" y="313.00" font-family="Liberation Sans" font-size="8.72" font-weight="normal" fill="#555" textLength="61.96" lengthAdjust="spacingAndGlyphs" >Steven Buchanan</text></svg>
<svg class="a" style="left:0;top:0" width="624" height="468"><text x="283.46" y="313.00" font-family="Liberation Sans" font-size="8.72" font-weight="normal" fill="#555" textLength="50.74" lengthAdjust="spacingAndGlyphs" >Sales Manager</text></svg>
<svg class="a" style="left:0;top:0" width="624" height="468"><text x="369.48" y="313.00" font-family="Liberation Sans" font-size="8.72" font-weight="normal" fill="#555" textLength="67.35" lengthAdjust="spacingAndGlyphs" >3/4/1955 12:00 AM</text></svg>
<svg class="a" style="left:0;top:0" width="624" height="468"><text x="449.06" y="313.00" font-family="Liberation Sans" font-size="8.72" font-weight="normal" fill="#555" textLength="26.77" lengthAdjust="spacingAndGlyphs" >London</text></svg>
<svg class="a" style="left:0;top:0" width="624" height="468"><text x="492.76" y="313.00" font-family="Liberation Sans" font-size="8.72" font-weight="normal" fill="#555" textLength="9.93" lengthAdjust="spacingAndGlyphs" >UK</text></svg>
<svg class="a" style="left:0;top:0" width="624" height="468"><text x="195.36" y="331.00" font-family="Liberation Sans" font-size="8.72" font-weight="normal" fill="#555" textLength="4.36" lengthAdjust="spacingAndGlyphs" >6</text></svg>
<svg class="a" style="left:0;top:0" width="624" height="468"><text x="212.97" y="331.00" font-family="Liberation Sans" font-size="8.72" font-weight="normal" fill="#555" textLength="58.02" lengthAdjust="spacingAndGlyphs" >Michael Suyama</text></svg>
<svg class="a" style="left:0;top:0" width="624" height="468"><text x="283.46" y="331.00" font-family="Liberation Sans" font-size="8.72" font-weight="normal" fill="#555" textLength="71.70" lengthAdjust="spacingAndGlyphs" >Sales Representative</text></svg>
<svg class="a" style="left:0;top:0" width="624" height="468"><text x="369.40" y="331.00" font-family="Liberation Sans" font-size="8.72" font-weight="normal" fill="#555" textLength="67.35" lengthAdjust="spacingAndGlyphs" >7/2/1963 12:00 AM</text></svg>
<svg class="a" style="left:0;top:0" width="624" height="468"><text x="449.06" y="331.00" font-family="Liberation Sans" font-size="8.72" font-weight="normal" fill="#555" textLength="26.77" lengthAdjust="spacingAndGlyphs" >London</text></svg>
<svg class="a" style="left:0;top:0" width="624" height="468"><text x="492.76" y="331.00" font-family="Liberation Sans" font-size="8.72" font-weight="normal" fill="#555" textLength="9.93" lengthAdjust="spacingAndGlyphs" >UK</text></svg>
<svg class="a" style="left:0;top:0" width="624" height="468"><text x="195.44" y="349.00" font-family="Liberation Sans" font-size="8.72" font-weight="normal" fill="#555" textLength="4.36" lengthAdjust="spacingAndGlyphs" >7</text></svg>
<svg class="a" style="left:0;top:0" width="624" height="468"><text x="212.97" y="349.00" font-family="Liberation Sans" font-size="8.72" font-weight="normal" fill="#555" textLength="41.44" lengthAdjust="spacingAndGlyphs" >Robert King</text></svg>
<svg class="a" style="left:0;top:0" width="624" height="468"><text x="283.46" y="349.00" font-family="Liberation Sans" font-size="8.72" font-weight="normal" fill="#555" textLength="71.70" lengthAdjust="spacingAndGlyphs" >Sales Representative</text></svg>
<svg class="a" style="left:0;top:0" width="624" height="468"><text x="369.48" y="349.00" font-family="Liberation Sans" font-size="8.72" font-weight="normal" fill="#555" textLength="71.82" lengthAdjust="spacingAndGlyphs" >5/29/1960 12:00 AM</text></svg>
<svg class="a" style="left:0;top:0" width="624" height="468"><text x="449.06" y="349.00" font-family="Liberation Sans" font-size="8.72" font-weight="normal" fill="#555" textLength="26.77" lengthAdjust="spacingAndGlyphs" >London</text></svg>
<svg class="a" style="left:0;top:0" width="624" height="468"><text x="492.76" y="349.00" font-family="Liberation Sans" font-size="8.72" font-weight="normal" fill="#555" textLength="9.93" lengthAdjust="spacingAndGlyphs" >UK</text></svg>
<svg class="a" style="left:0;top:0" width="624" height="468"><text x="195.36" y="371.90" font-family="Liberation Sans" font-size="8.72" font-weight="normal" fill="#555" textLength="4.36" lengthAdjust="spacingAndGlyphs" >8</text></svg>
<svg class="a" style="left:0;top:0" width="624" height="468"><text x="212.97" y="371.90" font-family="Liberation Sans" font-size="8.72" font-weight="normal" fill="#555" textLength="53.23" lengthAdjust="spacingAndGlyphs" >Laura Callahan</text></svg>
<svg class="a" style="left:0;top:0" width="624" height="468"><text x="283.12" y="367.10" font-family="Liberation Sans" font-size="8.72" font-weight="normal" fill="#555" textLength="41.09" lengthAdjust="spacingAndGlyphs" >Inside Sales</text></svg>
<svg class="a" style="left:0;top:0" width="624" height="468"><text x="283.42" y="376.90" font-family="Liberation Sans" font-size="8.72" font-weight="normal" fill="#555" textLength="39.41" lengthAdjust="spacingAndGlyphs" >Coordinator</text></svg>
<svg class="a" style="left:0;top:0" width="624" height="468"><text x="369.20" y="371.90" font-family="Liberation Sans" font-size="8.72" font-weight="normal" fill="#555" textLength="67.35" lengthAdjust="spacingAndGlyphs" >1/9/1958 12:00 AM</text></svg>
<svg class="a" style="left:0;top:0" width="624" height="468"><text x="449.34" y="371.90" font-family="Liberation Sans" font-size="8.72" font-weight="normal" fill="#555" textLength="24.98" lengthAdjust="spacingAndGlyphs" >Seattle</text></svg>
<svg class="a" style="left:0;top:0" width="624" height="468"><text x="492.76" y="371.90" font-family="Liberation Sans" font-size="8.72" font-weight="normal" fill="#555" textLength="14.70" lengthAdjust="spacingAndGlyphs" >USA</text></svg>
<svg class="a" style="left:0;top:0" width="624" height="468"><text x="540.56" y="371.90" font-family="Liberation Sans" font-size="8.72" font-weight="normal" fill="#555" textLength="12.35" lengthAdjust="spacingAndGlyphs" >WA</text></svg>
<svg class="a" style="left:0;top:0" width="624" height="468"><text x="195.40" y="394.00" font-family="Liberation Sans" font-size="8.72" font-weight="normal" fill="#555" textLength="4.36" lengthAdjust="spacingAndGlyphs" >9</text></svg>
<svg class="a" style="left:0;top:0" width="624" height="468"><text x="213.60" y="394.00" font-family="Liberation Sans" font-size="8.72" font-weight="normal" fill="#555" textLength="58.02" lengthAdjust="spacingAndGlyphs" >Anne Dodsworth</text></svg>
<svg class="a" style="left:0;top:0" width="624" height="468"><text x="283.46" y="394.00" font-family="Liberation Sans" font-size="8.72" font-weight="normal" fill="#555" textLength="71.70" lengthAdjust="spacingAndGlyphs" >Sales Representative</text></svg>
<svg class="a" style="left:0;top:0" width="624" height="468"><text x="369.40" y="394.00" font-family="Liberation Sans" font-size="8.72" font-weight="normal" fill="#555" textLength="67.35" lengthAdjust="spacingAndGlyphs" >7/2/1969 12:00 AM</text></svg>
<svg class="a" style="left:0;top:0" width="624" height="468"><text x="449.06" y="394.00" font-family="Liberation Sans" font-size="8.72" font-weight="normal" fill="#555" textLength="26.77" lengthAdjust="spacingAndGlyphs" >London</text></svg>
<svg class="a" style="left:0;top:0" width="624" height="468"><text x="492.76" y="394.00" font-family="Liberation Sans" font-size="8.72" font-weight="normal" fill="#555" textLength="9.93" lengthAdjust="spacingAndGlyphs" >UK</text></svg>
<div class="a" style="left:145px;top:218px;width:1px;height:199px;background:#f0f0f0;"></div>
<svg class="a" style="left:0px;top:0px;left:0;top:0" width="624" height="468" viewBox="0 0 624 468"><rect x="149.85" y="218.65" width="60.8" height="18.5" fill="none" stroke="#2462a6" stroke-width="1.7"/><rect x="209.4" y="235.9" width="3.2" height="3.2" fill="#2462a6"/></svg>
<div class="a" style="left:0px;top:403.5px;width:206px;height:13.5px;background:#e8e8e8;border-top:1px solid #c3c3c3;border-right:1px solid #c3c3c3"></div>
<svg class="a" style="left:0;top:0" width="624" height="468"><text x="1.64" y="412.70" font-family="Liberation Sans" font-size="7.35" font-weight="normal" fill="#555" textLength="196.42" lengthAdjust="spacingAndGlyphs" >basagalla.sharepoint.com/sites/RKSC1/Lists/.../Allitemsg.aspx</text></svg>
<div class="a" style="left:0px;top:417px;width:624px;height:26.5px;background:#dedede;border-top:1px solid #c8c8c8"></div>
<div class="a" style="left:2.5px;top:419px;width:125px;height:22px;background:#e6e6e6;border:1px solid #c4c4c4;border-radius:2px"></div>
<div class="a" style="left:118.5px;top:420px;width:1px;height:20px;background:#cfcfcf;"></div>
<svg class="a" style="left:121px;top:428px;" width="5" height="4" viewBox="0 0 5 4"><path d="M0.5 0.5 H4.5 L2.5 3 Z" fill="#555"/></svg>
<svg class="a" style="left:8.5px;top:423.5px;" width="9" height="11" viewBox="0 0 9 11"><path d="M0.5 0.5 H5.5 L8.5 3.5 V10.5 H0.5 Z" fill="#fafafa" stroke="#bbb" stroke-width="0.8"/></svg>
<svg class="a" style="left:0;top:0" width="624" height="468"><text x="24.83" y="433.20" font-family="Liberation Sans" font-size="7.91" font-weight="normal" fill="#333" textLength="58.34" lengthAdjust="spacingAndGlyphs" >RKHWApp (1).app</text></svg>
<svg class="a" style="left:516px;top:425px;" width="9" height="9" viewBox="0 0 9 9"><path d="M4.5 0.5 V5 M2 3 L4.5 5.5 L7 3" fill="none" stroke="#444" stroke-width="1.5"/><rect x="0.5" y="7" width="8" height="1.5" fill="#444"/></svg>
<svg class="a" style="left:0;top:0" width="624" height="468"><text x="528.58" y="432.90" font-family="Liberation Sans" font-size="7.49" font-weight="normal" fill="#333" textLength="69.69" lengthAdjust="spacingAndGlyphs" >Show all downloads...</text></svg>
<div class="a" style="left:528.9px;top:434px;width:68.7px;height:0.8px;background:#555;"></div>
<svg class="a" style="left:609.5px;top:427.5px;" width="6" height="6" viewBox="0 0 6 6"><path d="M0.5 0.5 L5.5 5.5 M5.5 0.5 L0.5 5.5" stroke="#555" stroke-width="1.2"/></svg>
<div class="a" style="left:0px;top:443.6px;width:624px;height:24.4px;background:#64c9e8;border-top:1px solid #5f8797"></div>
<div class="a" style="left:124px;top:444.6px;width:35.5px;height:23px;background:#8ad6ef;"></div>
<div class="a" style="left:85.5px;top:444px;width:1px;height:24px;background:#4a9fbf;"></div>
<div class="a" style="left:117.8px;top:444px;width:1px;height:24px;background:#4a9fbf;"></div>
<div class="a" style="left:120.6px;top:444px;width:1px;height:24px;background:#4a9fbf;"></div>
<div class="a" style="left:160.5px;top:444px;width:1px;height:24px;background:#4a9fbf;"></div>
<div class="a" style="left:196.5px;top:444px;width:1px;height:24px;background:#4a9fbf;"></div>
<div class="a" style="left:234px;top:444px;width:1px;height:24px;background:#4a9fbf;"></div>
<div class="a" style="left:273.5px;top:444px;width:1px;height:24px;background:#4a9fbf;"></div>
<div class="a" style="left:311.3px;top:444px;width:1px;height:24px;background:#4a9fbf;"></div>
<div class="a" style="left:348px;top:444px;width:1px;height:24px;background:#4a9fbf;"></div>
<svg class="a" style="left:0px;top:0px;left:0;top:0" width="624" height="468" viewBox="0 0 624 468"><rect x="18.6" y="446.6" width="9.2" height="15.6" fill="#2a86d8" stroke="#b8e6f6" stroke-width="0.7"/><rect x="19" y="447" width="8.4" height="4.5" fill="#1a5fb0"/><rect x="19.5" y="452" width="7.4" height="1.2" fill="#8fd0f4"/><rect x="21.4" y="456.8" width="15.9" height="7.6" rx="1.2" fill="#8a8a8a" stroke="#e8f4f8" stroke-width="0.8"/><rect x="25.5" y="455.2" width="7.5" height="1.8" fill="#777" stroke="#ddd" stroke-width="0.4"/><rect x="22.5" y="459.6" width="13.8" height="1.1" fill="#c8c8c8"/></svg>
<svg class="a" style="left:0px;top:0px;left:0;top:0" width="624" height="468" viewBox="0 0 624 468"><path d="M60.4 448.9 H74.6 L71.4 462.8 H57.2 Z" fill="#2f72c4" stroke="#1c4f90" stroke-width="0.6"/><path d="M60.6 449.6 H73.6 L72.6 453.5 H59.8 Z" fill="#5a98dc" opacity=".6"/><path d="M63 451.5 L68.5 455.8 L62 460" fill="none" stroke="#fff" stroke-width="2"/></svg>
<svg class="a" style="left:0px;top:0px;left:0;top:0" width="624" height="468" viewBox="0 0 624 468"><rect x="91.8" y="447.8" width="18.9" height="16.2" fill="#f1d670"/><rect x="93" y="449" width="16.5" height="3" fill="#f4e6b0"/><rect x="95" y="448.6" width="3.5" height="2.2" fill="#d9a070"/><rect x="100" y="449" width="3" height="2" fill="#e8b8a0"/><rect x="104" y="448.8" width="3" height="2.2" fill="#c8d890"/><rect x="93.2" y="452" width="16.2" height="5.2" fill="#fbf2c0"/><rect x="93.2" y="457.2" width="16.2" height="3.6" fill="#a6d9f0"/><rect x="98" y="461.6" width="6.5" height="1.5" fill="#f0c040"/></svg>
<svg class="a" style="left:0px;top:0px;left:0;top:0" width="624" height="468" viewBox="0 0 624 468"><path d="M141.6 455.5 L133.98 451.10 A8.8 8.8 0 0 1 149.22 451.10 Z" fill="#db4437"/><path d="M141.6 455.5 L149.22 451.10 A8.8 8.8 0 0 1 141.60 464.30 Z" fill="#f4c20d"/><path d="M141.6 455.5 L141.60 464.30 A8.8 8.8 0 0 1 133.98 451.10 Z" fill="#1e9e50"/><circle cx="141.6" cy="455.5" r="4.1" fill="#fff"/><circle cx="141.6" cy="455.5" r="3.2" fill="#4285f4"/></svg>
<svg class="a" style="left:0px;top:0px;left:0;top:0" width="624" height="468" viewBox="0 0 624 468"><rect x="169.3" y="446.2" width="19.4" height="19.1" fill="#1e60aa"/><path d="M176 454 L185 461.8" stroke="#fff" stroke-width="1.9" stroke-linecap="round"/><circle cx="174.8" cy="452.6" r="2.6" fill="#fff"/><path d="M172.6 449.4 L175.8 452.6 L174.4 449.2 Z" fill="#1e60aa"/><circle cx="174.6" cy="452.4" r="1" fill="#1e60aa"/><path d="M185.2 450 L178.6 456.6" stroke="#fff" stroke-width="1.3" stroke-linecap="round"/><path d="M178.6 456.6 L173.8 461.6" stroke="#fff" stroke-width="2.5" stroke-linecap="round"/></svg>
<svg class="a" style="left:0px;top:0px;left:0;top:0" width="624" height="468" viewBox="0 0 624 468"><defs><linearGradient id="np" x1="0" y1="0" x2="0" y2="1"><stop offset="0" stop-color="#e4f6f8"/><stop offset="0.55" stop-color="#7fd0da"/><stop offset="1" stop-color="#2fa6b8"/></linearGradient></defs><path d="M221 448.4 L223.8 448.9 V463.2 L218.6 462 Z" fill="#5b4636"/><path d="M210.7 448.4 H221 L218.6 462 L206.6 460 Z" fill="url(#np)"/><path d="M215 462.6 L222.6 454.5 L223.3 463.2 Z" fill="#f2f2f2"/></svg>
<svg class="a" style="left:0px;top:0px;left:0;top:0" width="624" height="468" viewBox="0 0 624 468"><path d="M254 449.3 H262.5 Q264 449.3 264 451 V460.8 Q264 462.5 262.5 462.5 H254 Z" fill="#f9e6e6"/><path d="M255 452.3 H263.6 M255 455.6 H263.6 M255 458.9 H263.6" stroke="#c43a45" stroke-width="1.1"/><path d="M245.6 448.6 L255.8 446.9 V464.6 L245.6 462.9 Z" fill="#a8232c"/></svg>
<svg class="a" style="left:0;top:0" width="624" height="468"><text x="247.17" y="459.60" font-family="Liberation Sans" font-size="12.54" font-weight="bold" fill="#fff" textLength="6.68" lengthAdjust="spacingAndGlyphs" >A</text></svg>
<svg class="a" style="left:0px;top:0px;left:0;top:0" width="624" height="468" viewBox="0 0 624 468"><path d="M284 456 Q284 449.5 291 449.5 Q297.5 449.5 297.5 454.5 Q297.5 457 294.5 457 Q292 457 292.5 459.5 Q293 462.5 289.5 462.5 Q284 462.5 284 456 Z" fill="#f4efe6" stroke="#cbbfa8" stroke-width="0.5"/><circle cx="287.3" cy="455" r="1.3" fill="#e25b4a"/><circle cx="290.3" cy="452.3" r="1.3" fill="#f2c230"/><circle cx="293.8" cy="452.5" r="1.2" fill="#5cb85c"/><circle cx="288.5" cy="459" r="1.2" fill="#4a8fe0"/><path d="M290.8 462.5 L300.6 449" stroke="#e08a3c" stroke-width="2"/><path d="M299.6 450.2 L301.2 448" stroke="#e8c050" stroke-width="2.2"/></svg>
<svg class="a" style="left:320.5px;top:446.5px;" width="19" height="16.5" viewBox="0 0 19 16.5"><path d="M7 1.5 H18 V15 H7 Z" fill="#fff" stroke="#2b579a" stroke-width="0.8"/><path d="M10 4.5 H16 M10 7.5 H16 M10 10.5 H16" stroke="#2b579a" stroke-width="1"/><path d="M0 2 L11 0 V16.5 L0 14.5 Z" fill="#2b579a"/><text x="5.5" y="11.5" font-size="7.5" font-weight="bold" fill="#fff" text-anchor="middle" font-family="Liberation Sans">W</text></svg>
<svg class="a" style="left:516.5px;top:454px;" width="5" height="4" viewBox="0 0 5 4"><path d="M0 3.5 L2.25 0.5 L4.5 3.5 Z" fill="#222"/></svg>
<svg class="a" style="left:528px;top:451.5px;" width="11" height="10" viewBox="0 0 11 10"><path d="M1 0.5 V9.5 M1 1 H7 V6 H1" fill="#f4f4f4" stroke="#555" stroke-width="0.8"/><circle cx="7.3" cy="6.8" r="3" fill="#e33"/><path d="M6 5.5 L8.6 8.1 M8.6 5.5 L6 8.1" stroke="#fff" stroke-width="0.9"/></svg>
<svg class="a" style="left:543px;top:451px;" width="11" height="10" viewBox="0 0 11 10"><rect x="1" y="0.5" width="3.5" height="4" fill="#eee" stroke="#666" stroke-width="0.6"/><rect x="6.5" y="0.5" width="3.5" height="4" fill="#eee" stroke="#666" stroke-width="0.6"/><rect x="3.5" y="5.5" width="4" height="4" fill="#eee" stroke="#666" stroke-width="0.6"/></svg>
<svg class="a" style="left:557.5px;top:451.5px;" width="10" height="10" viewBox="0 0 10 10"><path d="M0.5 3 H2.5 L5 0.5 V9.5 L2.5 7 H0.5 Z" fill="#f4f4f4" stroke="#666" stroke-width="0.6"/><circle cx="7" cy="6.8" r="3" fill="#e33"/><path d="M5.7 5.5 L8.3 8.1 M8.3 5.5 L5.7 8.1" stroke="#fff" stroke-width="0.9"/></svg>
<svg class="a" style="left:0;top:0" width="624" height="468"><text x="580.04" y="453.50" font-family="Liberation Sans" font-size="7.33" font-weight="normal" fill="#1a3344" textLength="26.56" lengthAdjust="spacingAndGlyphs" stroke="#1a3344" stroke-width="0.3">2:56 PM</text></svg>
<svg class="a" style="left:0;top:0" width="624" height="468"><text x="577.86" y="463.60" font-family="Liberation Sans" font-size="7.21" font-weight="normal" fill="#1a3344" textLength="31.72" lengthAdjust="spacingAndGlyphs" stroke="#1a3344" stroke-width="0.3">4/19/2016</text></svg>
<div class="a" style="left:617px;top:444px;width:1px;height:24px;background:#4a9fbf;"></div>
<div class="a" style="left:618px;top:444px;width:4px;height:24px;background:#74d0ec;"></div>
<div class="a" style="left:622px;top:444px;width:2px;height:24px;background:#4a9fbf;"></div>
<div class="a" style="left:0px;top:467px;width:624px;height:1px;background:#3e94b5;"></div>
</body></html>
